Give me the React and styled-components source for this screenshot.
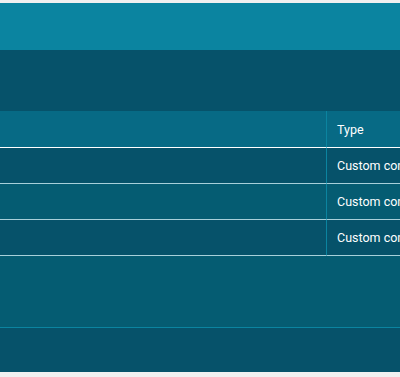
import React from 'react';
import styled, { createGlobalStyle } from 'styled-components';

const GlobalStyle = createGlobalStyle`
  html, body {
    margin: 0;
    padding: 0;
    background: #f0f0f0;
    overflow: hidden;
    font-family: Roboto, "Liberation Sans", sans-serif;
  }
`;

const Page = styled.div`
  padding: 3px 0 5px;
  width: 400px;
  overflow: hidden;
`;

const TopBar = styled.div`
  height: 47px;
  background: #0b84a0;
`;

const Band = styled.div`
  height: ${p => p.h}px;
  background: ${p => p.bg};
  border-bottom: ${p => (p.line ? `1px solid ${p.line}` : 'none')};
`;

const Table = styled.div`
  display: grid;
  grid-template-columns: 326px 140px;
  width: 466px;
`;

const HeadCell = styled.div`
  height: 36px;
  background: #076a85;
  border-bottom: 1px solid #ffffff;
  border-left: ${p => (p.divider ? '1px solid #0b84a0' : 'none')};
  display: flex;
  align-items: center;
  padding-left: ${p => (p.divider ? '10px' : '0')};
  color: #ffffff;
  font-size: 12.5px;
  white-space: nowrap;
`;

const Cell = styled.div`
  height: 35px;
  background: ${p => (p.alt ? '#055c72' : '#06526a')};
  border-bottom: 1px solid #a8d0da;
  border-left: ${p => (p.divider ? '1px solid #0b84a0' : 'none')};
  display: flex;
  align-items: center;
  padding-left: ${p => (p.divider ? '10px' : '0')};
  color: #ffffff;
  font-size: 12.5px;
  white-space: nowrap;
`;

const rows = ['Custom content', 'Custom content', 'Custom content'];

export default function App() {
  return (
    <>
      <GlobalStyle />
      <Page>
        <TopBar />
        <Band h={61} bg="#06526a" />
        <Table>
          <HeadCell />
          <HeadCell divider>Type</HeadCell>
          {rows.map((r, i) => (
            <React.Fragment key={i}>
              <Cell alt={i % 2 === 1} />
              <Cell alt={i % 2 === 1} divider>{r}</Cell>
            </React.Fragment>
          ))}
        </Table>
        <Band h={71} bg="#055c72" line="#0b84a0" />
        <Band h={44} bg="#06526a" />
      </Page>
    </>
  );
}
